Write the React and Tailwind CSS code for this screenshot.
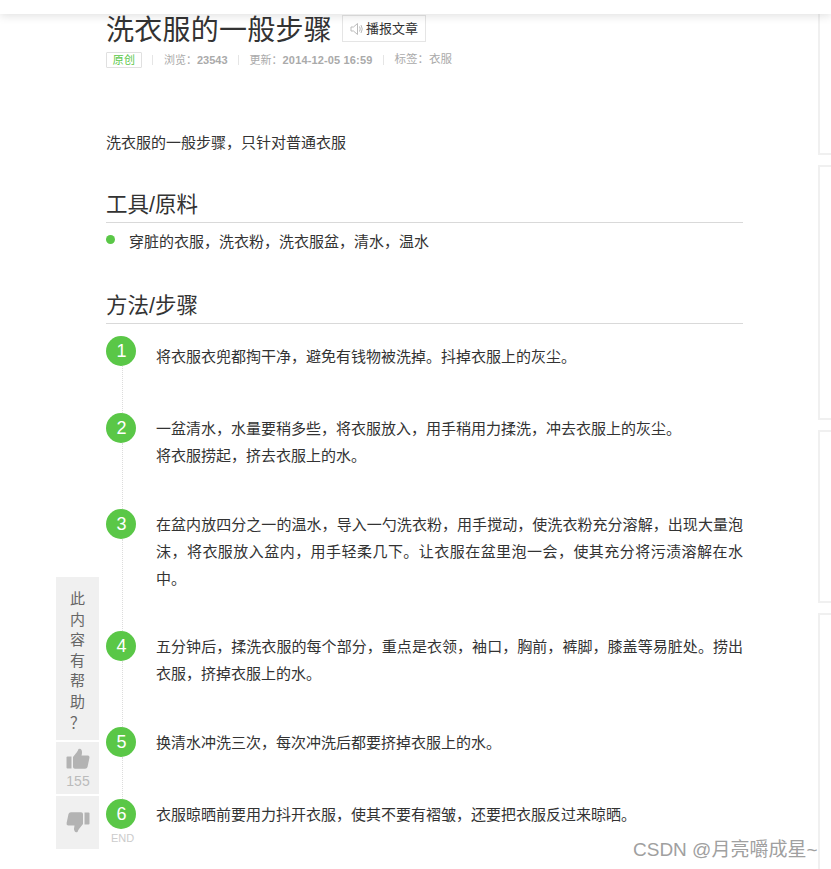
const font = { fontFamily: '"Liberation Sans", "Noto Sans CJK SC", sans-serif' };

const steps = [
  { n: 1, h: 'h-[77px]', pt: 'pt-[7px]', lines: ['将衣服衣兜都掏干净，避免有钱物被洗掉。抖掉衣服上的灰尘。'] },
  { n: 2, h: 'h-[96px]', pt: 'pt-[2px]', lines: ['一盆清水，水量要稍多些，将衣服放入，用手稍用力揉洗，冲去衣服上的灰尘。', '将衣服捞起，挤去衣服上的水。'] },
  { n: 3, h: 'h-[122px]', pt: 'pt-[2px]', lines: ['在盆内放四分之一的温水，导入一勺洗衣粉，用手搅动，使洗衣粉充分溶解，出现大量泡沫，将衣服放入盆内，用手轻柔几下。让衣服在盆里泡一会，使其充分将污渍溶解在水中。'] },
  { n: 4, h: 'h-[96px]', pt: 'pt-[2px]', lines: ['五分钟后，揉洗衣服的每个部分，重点是衣领，袖口，胸前，裤脚，膝盖等易脏处。捞出衣服，挤掉衣服上的水。'] },
  { n: 5, h: 'h-[72px]', pt: 'pt-[2px]', lines: ['换清水冲洗三次，每次冲洗后都要挤掉衣服上的水。'] },
  { n: 6, h: 'h-[60px]', pt: 'pt-[2px]', lines: ['衣服晾晒前要用力抖开衣服，使其不要有褶皱，还要把衣服反过来晾晒。'] },
];

function Thumb({ down }) {
  return (
    <svg width="24" height="22" viewBox="0 0 24 22" className={down ? 'rotate-180' : ''}>
      <path d="M0.5 9.5 Q0.5 8.5 1.5 8.5 H5.5 V20.5 H1.5 Q0.5 20.5 0.5 19.5 Z" fill="#b3b3b3" />
      <path d="M7 9 L11 4 Q12 2.5 12.5 1 Q14.5 0 15.5 2 Q16.5 4 15.5 7.5 H22 Q23.8 7.8 23.4 10 L21.5 19 Q21 20.8 19 20.8 H9 Q7 20.8 7 19 Z" fill="#b3b3b3" />
    </svg>
  );
}

export default function App() {
  return (
    <div style={font} className="relative h-[869px] w-[831px] overflow-hidden bg-white text-[#333]">
      <div className="relative z-10 h-[14px] bg-white shadow-[0_2px_10px_rgba(0,0,0,0.12)]" />

      <div className="flex">
        <main className="ml-[106px] w-[637px] shrink-0">
          <div className="flex h-[32px] items-start">
            <h1 className="mt-[1px] text-[28px] font-normal leading-[32px] tracking-[0.25px] text-[#333]">洗衣服的一般步骤</h1>
            <div className="ml-[10px] mt-[1px] flex h-[27px] w-[84px] items-center border border-[#e5e5e5] pl-[7px] text-[13px] text-[#333]">
              <svg width="14" height="14" viewBox="0 0 14 14" fill="none" stroke="#bbb" strokeWidth="1" className="mr-[2px]">
                <path d="M1 5 H3.5 L7.5 1.5 V12.5 L3.5 9 H1 Z" />
                <path d="M9.5 4.5 Q11 7 9.5 9.5 M11 3 Q13.5 7 11 11" />
              </svg>
              播报文章
            </div>
          </div>

          <div className="mt-[7px] flex h-[14px] items-center text-[11px] text-[#aaa]">
            <span className="flex h-[16px] w-[36px] items-center justify-center rounded-[1px] border border-[#e0e0e0] text-[11px] tracking-[0.3px] text-[#5bc84a]">原创</span>
            <span className="ml-[10px] mr-[11px] h-[10px] w-px bg-[#e5e5e5]" />
            <span>浏览：<b className="font-bold">23543</b></span>
            <span className="mx-[10.5px] h-[10px] w-px bg-[#e5e5e5]" />
            <span>更新：<b className="font-bold tracking-[0.15px]">2014-12-05 16:59</b></span>
            <span className="mx-[10.5px] h-[10px] w-px bg-[#e5e5e5]" />
            <span className="text-[11.5px]">标签：衣服</span>
          </div>

          <p className="mt-[62px] text-[15px] leading-[27px]">洗衣服的一般步骤，只针对普通衣服</p>

          <h2 className="mt-[36px] border-b border-[#d9d9d9] pb-[4px] text-[21.5px] font-normal leading-[26px] text-[#333]">工具/原料</h2>
          <div className="mt-[6px] flex h-[27px] items-center text-[15px]">
            <span className="mb-[6px] mr-[14px] h-[9px] w-[9px] rounded-full bg-[#5ac747]" />
            穿脏的衣服，洗衣粉，洗衣服盆，清水，温水
          </div>

          <h2 className="mt-[37px] border-b border-[#d9d9d9] pb-[4px] text-[21.5px] font-normal leading-[26px] text-[#333]">方法/步骤</h2>

          <ol className="mt-[12px]">
            {steps.map((s, i) => (
              <li key={s.n} className={`flex ${s.h}`}>
                <div className="flex w-[30px] shrink-0 flex-col items-center">
                  <span className="flex h-[30px] w-[30px] shrink-0 items-center justify-center rounded-full bg-[#5ac747] pl-[1px] pt-[1px] text-[18px] text-white">{s.n}</span>
                  {i < 5 ? (
                    <span className="ml-[2px] w-0 grow border-l border-dotted border-[#dcdcdc]" />
                  ) : (
                    <span className="ml-[3px] mt-[2px] text-[11px] leading-[14px] text-[#ccc]">END</span>
                  )}
                </div>
                <div className={`ml-[20px] w-[587px] ${s.pt} text-justify text-[15px] leading-[27px]`}>
                  {s.lines.map((l) => (
                    <p key={l}>{l}</p>
                  ))}
                </div>
              </li>
            ))}
          </ol>
        </main>

        <aside className="ml-[75px] flex w-[20px] shrink-0 flex-col">
          <div className="h-[141px] border-b-2 border-l-2 border-[#f0f0f0]" />
          <div className="mt-[10px] h-[255px] border-b-2 border-l-2 border-t-2 border-[#f0f0f0]" />
          <div className="mt-[10px] h-[173px] border-b-2 border-l-2 border-t-2 border-[#f0f0f0]" />
          <div className="mt-[10px] h-[300px] border-l-2 border-t-2 border-[#f0f0f0]" />
        </aside>
      </div>

      <div className="absolute left-[56px] top-[577px] flex w-[43px] flex-col gap-[2px]">
        <div className="flex h-[163px] flex-col items-center bg-[#f0f0f0] pt-[12px] text-[15px] leading-[20.6px] text-[#666]">
          {['此', '内', '容', '有', '帮', '助', '？'].map((c) => (
            <span key={c}>{c}</span>
          ))}
        </div>
        <div className="flex h-[52px] flex-col items-center bg-[#f0f0f0] pl-[1px] pt-[6px]">
          <Thumb />
          <span className="mt-[4px] text-[14px] leading-[15px] text-[#bbb]">155</span>
        </div>
        <div className="flex h-[53px] flex-col items-center bg-[#f0f0f0] pl-[1px] pt-[15px]">
          <Thumb down />
        </div>
      </div>

      <div className="absolute left-[633px] top-[838px] whitespace-nowrap text-[19px] leading-[24px] text-[#a0a0a0]">CSDN @月亮嚼成星~</div>
    </div>
  );
}
